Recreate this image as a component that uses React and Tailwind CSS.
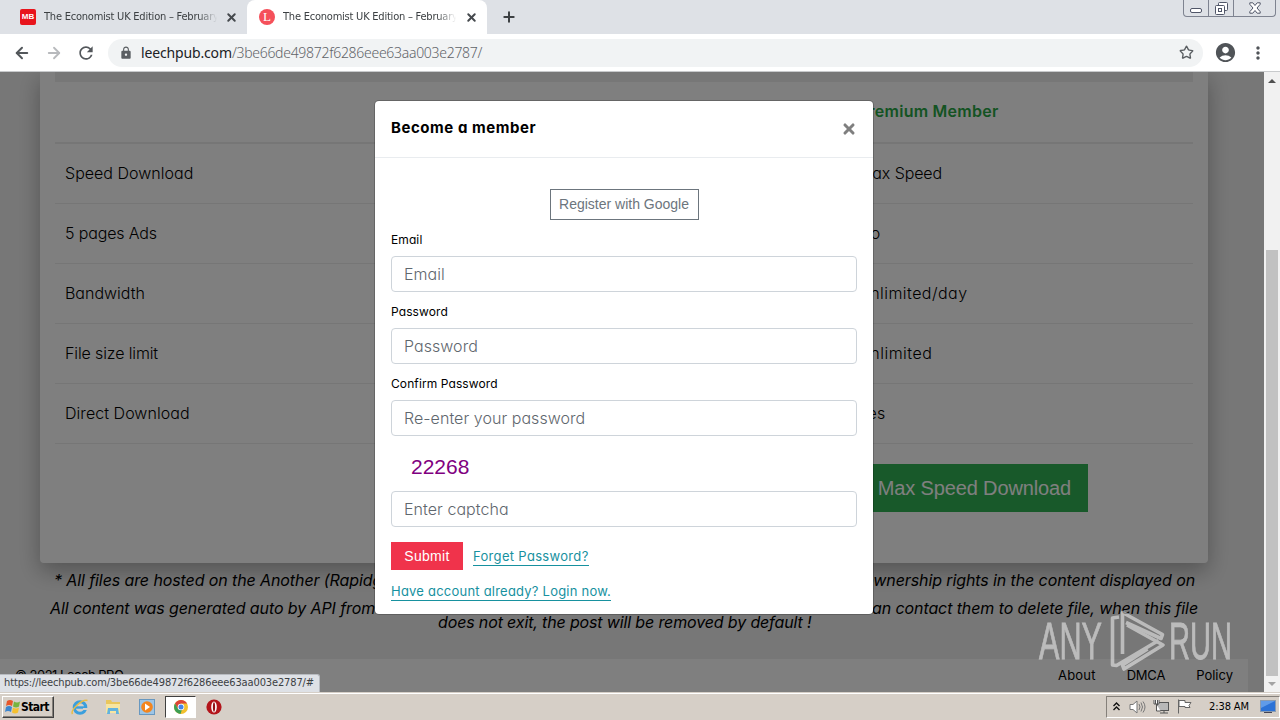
import { ArrowLeft, ArrowRight, Plus, Star, X } from "lucide-react";
import { MdAccountCircle, MdLock, MdMoreVert, MdRefresh } from "react-icons/md";

const rows = [
  { label: "Speed Download", value: "Max Speed", l: "tracking-[0.02px]", v: "tracking-[-0.1px]" },
  { label: "5 pages Ads", value: "No", l: "tracking-[-0.15px]", v: "tracking-[0.5px]" },
  { label: "Bandwidth", value: "Unlimited/day", l: "tracking-[-0.02px]", v: "tracking-[0.45px]" },
  { label: "File size limit", value: "Unlimited", l: "tracking-[-0.12px]", v: "tracking-[0.5px]" },
  { label: "Direct Download", value: "Yes", l: "tracking-[0.05px]", v: "tracking-[0.1px]" },
];

function Tab({ active, icon }) {
  return (
    <div
      className={
        active
          ? "relative flex h-[34px] w-[240px] items-center rounded-t-lg bg-white pl-3 pr-[9px]"
          : "flex h-[34px] w-[240px] items-center pl-[13px] pr-[9px]"
      }
    >
      {icon}
      <span className="ml-[8px] w-[175px] overflow-hidden whitespace-nowrap font-['DejaVu_Sans_Condensed','DejaVu_Sans',sans-serif] text-[11px] tracking-[-0.22px] text-[#3c4043] [mask-image:linear-gradient(to_right,black_88%,transparent_99%)]">
        The Economist UK Edition – February
      </span>
      <X size={13} strokeWidth={3.6} className="ml-auto shrink-0 text-[#45494d]" />
    </div>
  );
}

function Browser() {
  return (
    <header className="h-[72px] shrink-0 border-b border-[#c8cacc] bg-white">
      <div className="flex h-[34px] justify-between bg-[#dee1e6]">
        <div className="flex pl-[7px]">
          <Tab
            icon={
              <span className="flex size-4 items-center justify-center rounded-[2px] bg-[#e8141c] font-['Liberation_Sans',sans-serif] text-[8px] font-bold text-white">
                MB
              </span>
            }
          />
          <Tab
            active
            icon={
              <span className="flex size-4 items-center justify-center rounded-full bg-[#f5505a] font-['Liberation_Serif',serif] text-[13px] text-white">
                L
              </span>
            }
          />
          <Plus size={16} strokeWidth={3} className="ml-[14px] mt-[9px] text-[#3c4043]" />
        </div>
        <div className="mr-[4px] flex h-[17px] rounded-b-[4px] border border-t-0 border-[#7e8390] text-[#505668]">
          <div className="flex w-[25px] items-end justify-center border-r border-[#7e8390] pb-[3px]">
            <span className="h-[5px] w-[12px] rounded-[2px] border border-[#505668] bg-white" />
          </div>
          <div className="flex w-[25px] items-center justify-center border-r border-[#7e8390]">
            <svg width="13" height="13" viewBox="0 0 13 13" fill="#fff" stroke="currentColor">
              <rect x="3.5" y="0.5" width="9" height="8" rx="1" />
              <rect x="0.5" y="3.5" width="9" height="9" rx="1" />
              <rect x="3.5" y="6.5" width="3" height="3" />
            </svg>
          </div>
          <div className="flex w-[41px] items-center justify-center">
            <svg width="12" height="12" viewBox="0 0 12 12" fill="#fff" stroke="currentColor">
              <path d="M.8.8h3L6 3.500 8.200.8h3v1.500L8 6l3.200 3.700v1.500h-3L6 8.500 3.800 11.200h-3V9.700L4 6 .8 2.300z" />
            </svg>
          </div>
        </div>
      </div>
      <div className="flex h-[37px] items-center pl-[13px]">
        <ArrowLeft size={18} strokeWidth={2.6} className="text-[#53575b]" />
        <ArrowRight size={18} strokeWidth={2.4} className="ml-[14px] text-[#b8babd]" />
        <MdRefresh size={20} className="ml-[13px] text-[#53575b]" />
        <div className="ml-[12px] flex h-[28px] w-[1095px] items-center rounded-full bg-[#f1f3f4] pl-[11px] pr-[9px]">
          <MdLock size={14} className="text-[#5a5e62]" />
          <p className="ml-[8px] whitespace-nowrap pb-px font-['Noto_Sans',sans-serif] text-[14px] font-light tracking-[-0.29px] text-[#5f6368]">
            <span className="font-normal tracking-[-0.15px] text-[#202124]">leechpub.com</span>
            /3be66de49872f6286eee63aa003e2787/
          </p>
          <Star size={15} strokeWidth={2.2} className="ml-auto text-[#5a5e62]" />
        </div>
        <MdAccountCircle size={23} className="ml-[11px] text-[#505458]" />
        <MdMoreVert size={20} className="ml-[11px] text-[#505458]" />
      </div>
    </header>
  );
}

function PlanTable() {
  return (
    <section className="ml-10 mr-14 h-[491px] rounded-b-[4px] bg-white px-[15px] shadow-[0_8px_22px_rgba(0,0,0,0.3)]">
      <div className="h-[10px] bg-[#efefef]" />
      <div className="flex h-[62px] items-center border-b-2 border-[#ededed] pl-[803px]">
        <span className="whitespace-nowrap pb-[3px] text-[16px] font-semibold tracking-[0.25px] text-[#28a745]">
          Premium Member
        </span>
      </div>
      {rows.map((row) => (
        <div
          key={row.label}
          className="flex h-[60px] items-center border-b border-[#ececec] pb-[2px] pl-[10px] text-[16px] font-[350]"
        >
          <span className={`w-[793px] ${row.l}`}>{row.label}</span>
          <span className={row.v}>{row.value}</span>
        </div>
      ))}
      <div className="flex pl-[803px] pt-[20px]">
        <button className="h-[48px] w-[230px] whitespace-nowrap bg-[#30b354] pr-[17px] text-right font-['Liberation_Sans',sans-serif] text-[20px] tracking-[-0.13px] text-white">
          Max Speed Download
        </button>
      </div>
    </section>
  );
}

function Page() {
  return (
    <main className="h-full w-[1264px] overflow-hidden bg-[#efefef]">
      <PlanTable />
      <div className="flex h-[96px] flex-col whitespace-nowrap pt-[10px] text-[16px] italic leading-[14px]">
        <p className="flex justify-between pl-[54px] pr-[69px]">
          <span className="tracking-[-0.1px]">* All files are hosted on the Another (Rapidgator</span>
          <span className="tracking-[-0.1px]">ownership rights in the content displayed on</span>
        </p>
        <p className="mt-[14px] flex justify-between pl-[50px] pr-[66px]">
          <span className="tracking-[-0.1px]">All content was generated auto by API from</span>
          <span className="tracking-[-0.1px]">can contact them to delete file, when this file</span>
        </p>
        <p className="pl-[438px] tracking-[-0.14px]">does not exit, the post will be removed by default !</p>
      </div>
      <footer className="mr-4 flex h-[33px] items-center justify-between bg-white pl-[15px] pr-[15px] text-[13px]">
        <span className="tracking-[-0.5px]">© 2021 Leech PRO</span>
        <nav className="flex gap-[31px]">
          <span className="tracking-[0.2px]">About</span>
          <span className="tracking-[-0.2px]">DMCA</span>
          <span>Policy</span>
        </nav>
      </footer>
    </main>
  );
}

function Field({ label, placeholder }) {
  return (
    <label className="block h-[72px] text-[12px] leading-[16px] tracking-[0.1px] text-black">
      {label}
      <input
        placeholder={placeholder}
        className="mt-[8px] block h-[36px] w-full rounded-[4px] border border-[#ced4da] px-3 text-[16px] font-light tracking-[0.05px] placeholder:text-[#5f676e]"
      />
    </label>
  );
}

function MemberModal() {
  return (
    <div className="absolute left-[375px] top-[29px] h-[513px] w-[498px] rounded-[4px] bg-white shadow-[0_0_0_1px_rgba(0,0,0,0.2)]">
      <div className="flex h-[57px] items-center justify-between border-b border-[#e9ecef] px-4 pb-px">
        <h2 className="text-[15px] font-bold tracking-[0.55px]">Become a member</h2>
        <X size={16} strokeWidth={4.6} className="text-[#7f7f7f]" />
      </div>
      <div className="px-4 pt-[31px]">
        <button className="mx-auto block h-[31px] w-[149px] whitespace-nowrap border border-[#6c757d] font-['Liberation_Sans',sans-serif] text-[14px] text-[#6c757d]">
          Register with Google
        </button>
        <div className="mt-[12px]">
          <Field label="Email" placeholder="Email" />
          <Field label="Password" placeholder="Password" />
          <Field label="Confirm Password" placeholder="Re-enter your password" />
        </div>
        <p className="mt-[7px] h-[24px] pl-[20px] font-['Liberation_Sans',sans-serif] text-[21px] leading-[24px] text-[#800080]">
          22268
        </p>
        <input
          placeholder="Enter captcha"
          className="mt-[12px] block h-[36px] w-full rounded-[4px] border border-[#ced4da] px-3 text-[16px] font-light tracking-[0.05px] placeholder:text-[#5f676e]"
        />
        <div className="mt-[15px] flex items-center gap-[10px]">
          <button className="h-[28px] w-[72px] bg-[#f0334b] font-['Liberation_Sans',sans-serif] text-[14px] tracking-[0.3px] text-white">
            Submit
          </button>
          <a className="mt-[2px] whitespace-nowrap border-b border-[#17919f] text-[13px] leading-[17px] tracking-[0.32px] text-[#17919f]">
            Forget Password?
          </a>
        </div>
        <a className="mt-[13px] inline-block whitespace-nowrap border-b border-[#17919f] text-[13px] leading-[17px] tracking-[0.22px] text-[#17919f]">
          Have account already? Login now.
        </a>
      </div>
    </div>
  );
}

function Scrollbar() {
  return (
    <div className="flex w-4 flex-col items-center bg-[#f1f1f1]">
      <svg width="8" height="4" viewBox="0 0 8 4" className="mt-[7px]">
        <path d="M0 4L4 0l4 4z" fill="#505050" />
      </svg>
      <div className="mt-[167px] h-[426px] w-[12px] bg-[#c1c1c1]" />
      <svg width="8" height="4" viewBox="0 0 8 4" className="mt-[6px]">
        <path d="M0 0h8L4 4z" fill="#a3a3a3" />
      </svg>
    </div>
  );
}

function Watermark() {
  return (
    <svg
      width="196"
      height="62"
      viewBox="0 0 196 62"
      className="absolute left-[1038px] top-[538px] opacity-50"
      fill="#fff"
      stroke="#fff"
      strokeWidth="0.8"
      fontFamily="'Liberation Sans Narrow', 'Liberation Sans', sans-serif"
      fontSize="52"
    >
      <text x="1" y="49" textLength="63" lengthAdjust="spacingAndGlyphs">ANY</text>
      <text x="131" y="49" textLength="63" lengthAdjust="spacingAndGlyphs">RUN</text>
      <g fill="none" strokeWidth="3.6" strokeLinejoin="round">
        <path d="M84.500 44V2.500l40 22-1.500 4-35-16" />
        <path d="M89 15l36 20-39 24-1.500-4 25-16" />
        <path d="M81 7l-6.500 1v47l4 .5 42-25" />
      </g>
    </svg>
  );
}

function Taskbar() {
  return (
    <footer className="flex h-7 shrink-0 items-center border-t border-[#d6cfc7] bg-[#d6cfc7] pl-[2px] shadow-[inset_0_1px_0_#fff]">
      <button className="flex h-[22px] w-[52px] items-center border border-b-[#404040] border-l-white border-r-[#404040] border-t-white pl-[2px] font-['DejaVu_Sans_Condensed',sans-serif] text-[12px] font-bold tracking-[-0.6px] shadow-[inset_-1px_-1px_0_#85807a]">
        <svg width="16" height="15" viewBox="0 0 16 15" className="shrink-0">
          <path d="M2 2q3-2 6 0L7 7Q4 5 1 7z" fill="#e8572b" />
          <path d="M9 2.500q3 2 6 0L14 7.500q-3 2-6 0z" fill="#77b43f" />
          <path d="M1 8q3-2 6 0l-1 5q-3-2-6 0z" fill="#3d86cf" />
          <path d="M8 8.500q3 2 6 0L13 13.500q-3 2-6 0z" fill="#f5c02f" />
        </svg>
        Start
      </button>
      <svg width="18" height="18" viewBox="0 0 18 18" className="ml-[17px]" fill="none">
        <circle cx="9" cy="9.500" r="5.800" stroke="#3b9fdd" strokeWidth="3" />
        <path d="M4 9.500h10" stroke="#3b9fdd" strokeWidth="2.400" />
        <path d="M12 11h5" stroke="#d6cfc7" strokeWidth="2" />
        <path d="M1.500 16C-1 12 11 1 16.500 2.500" stroke="#e9bd45" strokeWidth="1.500" />
      </svg>
      <svg width="16" height="16" viewBox="0 0 16 16" className="ml-[16px]">
        <path d="M1 1h5l1 2h8v5H1z" fill="#e9c65c" />
        <path d="M1 5h14v9H1z" fill="#f7e5a0" />
        <path d="M3 9h10l1 6h-3v-3H5v3H2z" fill="#62b3de" />
      </svg>
      <svg width="16" height="16" viewBox="0 0 16 16" className="ml-[18px]">
        <rect x="0.500" y="0.500" width="15" height="15" fill="#9dc5e6" stroke="#6898c0" />
        <circle cx="8" cy="8" r="5.800" fill="#f3851e" />
        <path d="M6 4.500l5 3.500-5 3.500z" fill="#fff" />
      </svg>
      <div className="ml-[10px] flex h-[22px] w-[31px] items-center justify-center border border-b-white border-l-[#404040] border-r-white border-t-[#404040] bg-white">
        <svg width="14" height="14" viewBox="0 0 14 14">
          <circle cx="7" cy="7" r="7" fill="#f2c02e" />
          <path d="M1 3.500A7 7 0 0 1 13.100 3.500H7L4 8.800z" fill="#dc4437" />
          <path d="M1 3.500L4 8.800 8 9.500 6.500 14A7 7 0 0 1 1 3.500z" fill="#3c9e54" />
          <circle cx="7" cy="7" r="3.300" fill="#fff" />
          <circle cx="7" cy="7" r="2.500" fill="#4384e8" />
        </svg>
      </div>
      <svg width="16" height="16" viewBox="0 0 16 16" className="ml-[10px]">
        <circle cx="8" cy="8" r="7.600" fill="#b3151b" />
        <ellipse cx="8" cy="8" rx="2.800" ry="5.600" fill="#fff" />
        <ellipse cx="8" cy="8" rx="1.100" ry="4.800" fill="#941116" />
      </svg>
      <div className="ml-auto flex h-[22px] w-[174px] items-center border border-b-white border-l-[#85807a] border-r-white border-t-[#85807a] pl-[6px]">
        <svg width="7" height="9" viewBox="0 0 7 9" fill="none" stroke="#111" strokeWidth="1.400">
          <path d="M.5 4l3-3 3 3M.5 8l3-3 3 3" />
        </svg>
        <svg width="17" height="14" viewBox="0 0 17 14" className="ml-[9px]" fill="none" stroke="#777">
          <path d="M1 4.500h3L8 1v12L4 9.500H1z" fill="#fff" />
          <path d="M10 4q2 3 0 6M12 2.500q3 4.500 0 9M14 1.500q4 5.500 0 11" />
        </svg>
        <svg width="16" height="15" viewBox="0 0 16 15" className="ml-[7px]" fill="#fff" stroke="#555">
          <rect x="4.500" y="3.500" width="11" height="8" fill="#b8b8b8" />
          <path d="M7 14h8M11 12v2" />
          <path d="M1 1v4h5V1M2.500 1v4M4.500 1v4M3.500 5v7h4" />
        </svg>
        <svg width="16" height="15" viewBox="0 0 16 15" className="ml-[8px]" fill="#fff" stroke="#666">
          <path d="M1.500.5v14M2 1.500h6v2h6l-2 3 1 2H8v-1H2z" />
        </svg>
        <span className="ml-[16px] whitespace-nowrap pt-[2px] font-['DejaVu_Sans_Condensed',sans-serif] text-[11px] tracking-[-0.1px]">
          2:38 AM
        </span>
        <svg width="16" height="14" viewBox="0 0 16 14" className="ml-auto mr-[3px]">
          <rect x="0.500" y="0.500" width="15" height="11" fill="#2c72d6" stroke="#8a9bb0" />
          <path d="M1 1h14L1 8z" fill="#609be8" />
          <path d="M4 12.500h8" stroke="#445" />
        </svg>
      </div>
    </footer>
  );
}

export default function App() {
  return (
    <div className="flex h-[720px] w-[1280px] flex-col overflow-hidden font-['Inter',sans-serif] text-black [font-feature-settings:'cv11']">
      <Browser />
      <div className="relative flex h-[620px]">
        <Page />
        <div className="absolute inset-y-0 left-0 w-[1264px] bg-black/50" />
        <MemberModal />
        <Watermark />
        <Scrollbar />
        <div className="absolute bottom-0 left-0 flex h-[18px] w-[320px] items-center whitespace-nowrap rounded-tr-[3px] border-r border-t border-[#b8bbc0] bg-[#dee1e6] pl-[4px] font-['DejaVu_Sans_Condensed',sans-serif] text-[11px] tracking-[-0.13px] text-[#3c4043]">
          https://leechpub.com/3be66de49872f6286eee63aa003e2787/#
        </div>
      </div>
      <Taskbar />
    </div>
  );
}
